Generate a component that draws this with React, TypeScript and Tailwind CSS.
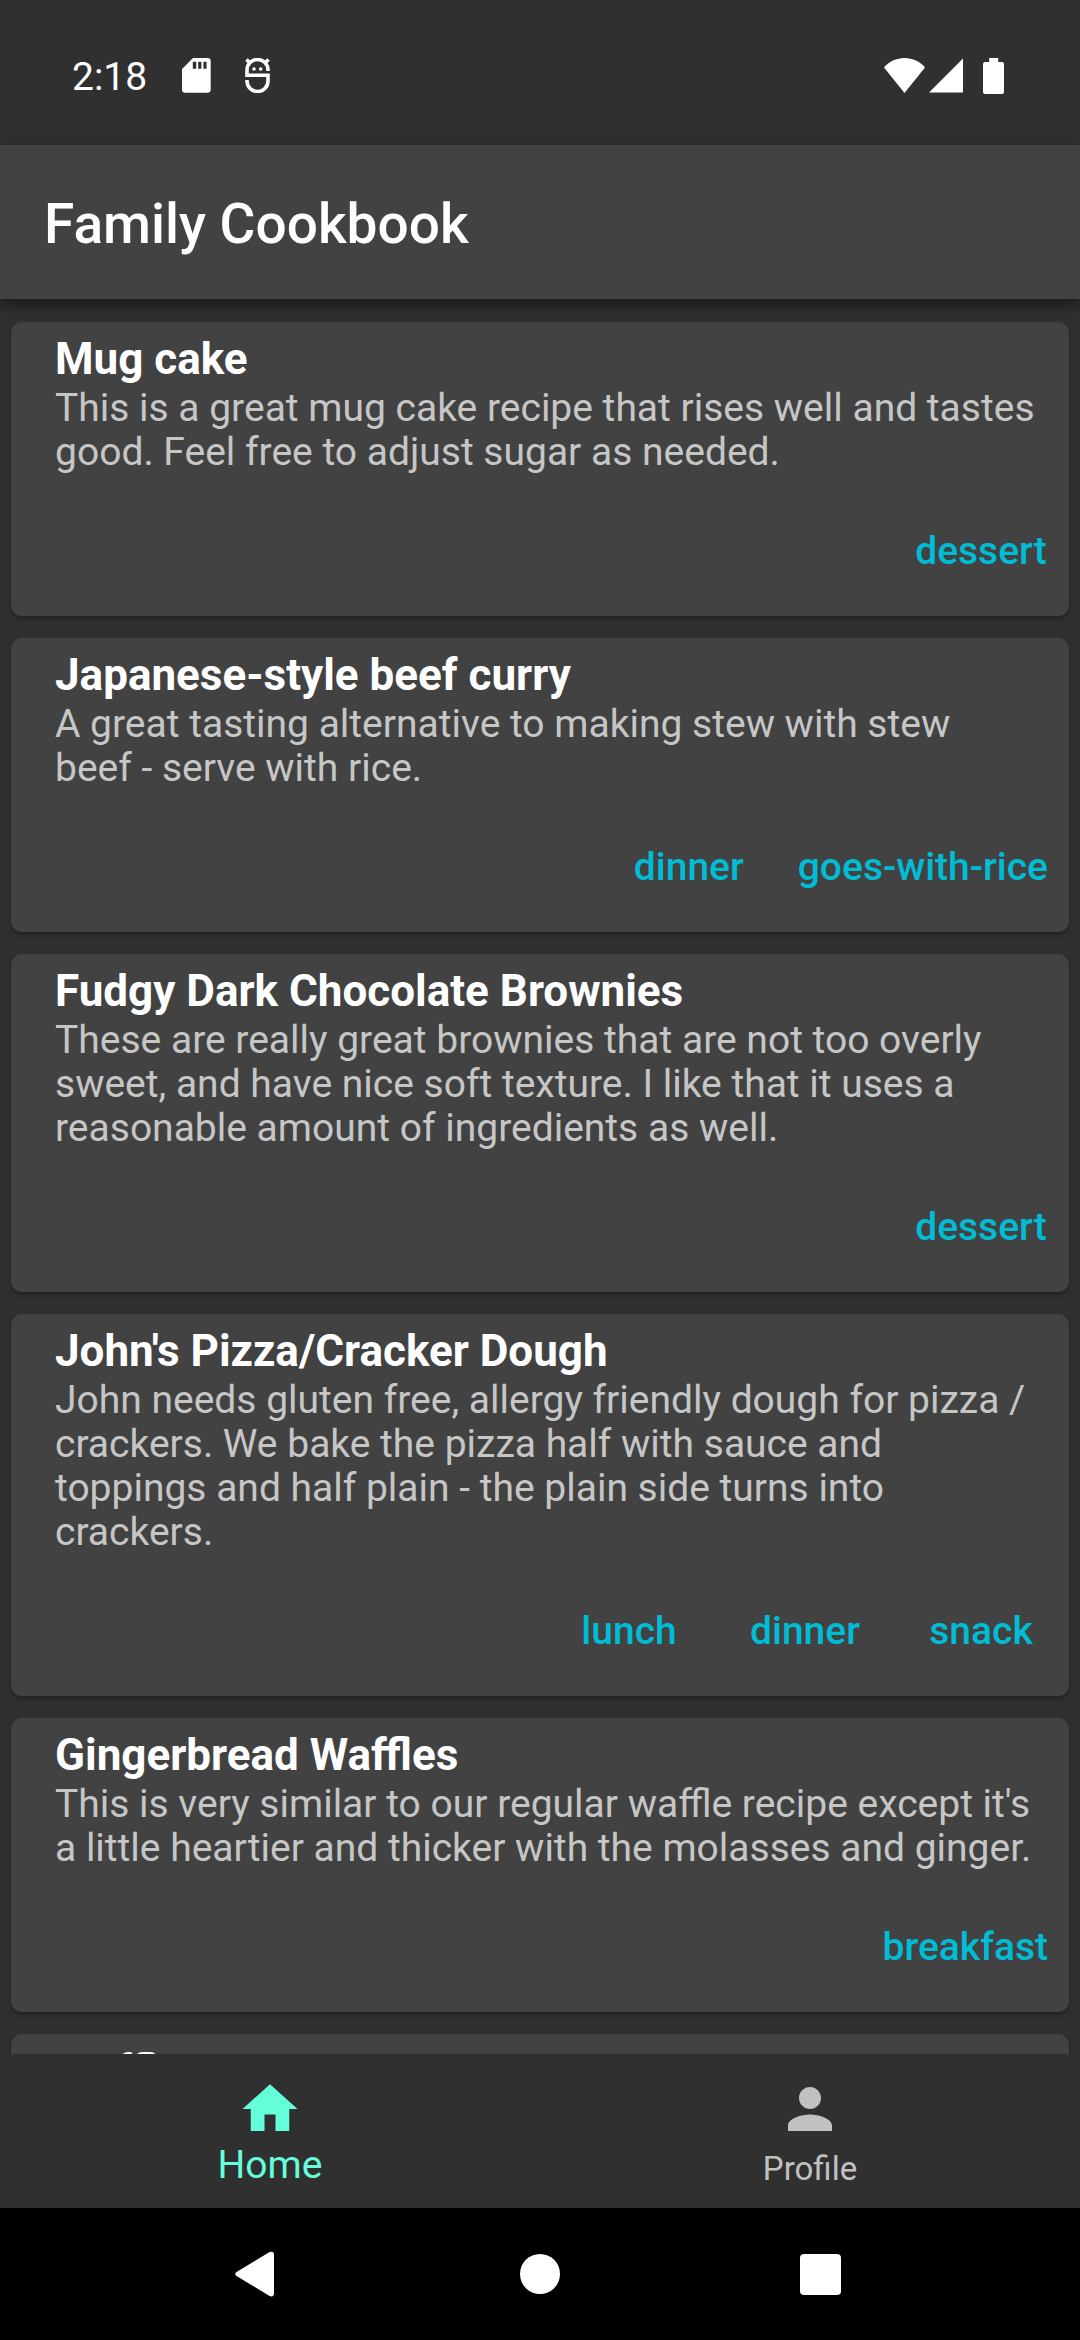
import React from "react";

type Recipe = { title: string; description: string; tags: string[] };

const recipes: Recipe[] = [
  {
    title: "Mug cake",
    description:
      "This is a great mug cake recipe that rises well and tastes good. Feel free to adjust sugar as needed.",
    tags: ["dessert"],
  },
  {
    title: "Japanese-style beef curry",
    description:
      "A great tasting alternative to making stew with stew beef - serve with rice.",
    tags: ["dinner", "goes-with-rice"],
  },
  {
    title: "Fudgy Dark Chocolate Brownies",
    description:
      "These are really great brownies that are not too overly sweet, and have nice soft texture. I like that it uses a reasonable amount of ingredients as well.",
    tags: ["dessert"],
  },
  {
    title: "John's Pizza/Cracker Dough",
    description:
      "John needs gluten free, allergy friendly dough for pizza / crackers. We bake the pizza half with sauce and toppings and half plain - the plain side turns into crackers.",
    tags: ["lunch", "dinner", "snack"],
  },
  {
    title: "Gingerbread Waffles",
    description:
      "This is very similar to our regular waffle recipe except it's a little heartier and thicker with the molasses and ginger.",
    tags: ["breakfast"],
  },
  {
    title: "Waffles",
    description: "",
    tags: [],
  },
];

function StatusBar() {
  return (
    <div className="flex h-[145px] shrink-0 items-center justify-between pt-[6px] pr-[76px] pl-[72px] text-white">
      <div className="flex items-center">
        <span className="pt-[2px] text-[39px] leading-[46px]">2:18</span>
        <svg className="ml-[35px] h-[35px] w-[29px]" viewBox="0 0 29 35" fill="currentColor" aria-hidden="true">
          <path
            fillRule="evenodd"
            d="M11 0H25.500A3.200 3.200 0 0 1 28.700 3.200V31.500A3.200 3.200 0 0 1 25.500 34.700H3.200A3.200 3.200 0 0 1 0 31.500V11ZM10.800 3.800V10.800H14.200V3.800ZM16.200 3.800V10.800H19.400V3.800ZM21.400 3.800V10.800H24.600V3.800Z"
          />
        </svg>
        <svg className="ml-[34px] h-[35px] w-[25px]" viewBox="0 0 25 35" fill="none" stroke="currentColor" strokeWidth="3.600" aria-hidden="true">
          <path d="M23 13V12A10.500 10.500 0 0 0 2 12V17.300H23V23A10.500 10.500 0 0 1 2 23V22" />
          <path d="M1.500 1.500L5 5M23.500 1.500L20 5" />
          <circle cx="9" cy="11" r="1.800" fill="currentColor" stroke="none" />
          <circle cx="15.700" cy="11" r="1.800" fill="currentColor" stroke="none" />
        </svg>
      </div>
      <div className="flex items-center">
        <svg className="h-[35px] w-[41px]" viewBox="0 0 41 35" fill="currentColor" aria-hidden="true">
          <path d="M20.500 35L0 9.500C5 3.500 12.500 0 20.500 0S36 3.500 41 9.500Z" />
        </svg>
        <svg className="ml-1 h-[35px] w-[34px]" viewBox="0 0 34 35" fill="currentColor" aria-hidden="true">
          <path d="M34 0.500V34.500H0Z" />
        </svg>
        <svg className="ml-5 h-[36px] w-[21px]" viewBox="0 0 21 36" fill="currentColor" aria-hidden="true">
          <path d="M6.200 0H15.200V4H19A2 2 0 0 1 21 6V34A2 2 0 0 1 19 36H2A2 2 0 0 1 0 34V6A2 2 0 0 1 2 4H6.200Z" />
        </svg>
      </div>
    </div>
  );
}

function RecipeCard({ title, description, tags }: Recipe) {
  return (
    <li className="rounded-[11px] bg-[#424242] pt-[11px] shadow-[0_3px_4px_rgba(0,0,0,0.3)]">
      <div className="pr-[34px] pl-11">
        <h2 className="text-[44px] leading-[52px] font-bold text-white">{title}</h2>
        <p className="pt-px text-[39px] leading-[44px] text-[#c6c6c6]">{description}</p>
      </div>
      <div className="flex justify-end pt-[10px]">
        {tags.map((tag) => (
          <button
            key={tag}
            type="button"
            className="h-[132px] min-w-[176px] px-[21px] pt-[2px] text-[39px] leading-[44px] font-medium text-[#00bcd4]"
          >
            {tag}
          </button>
        ))}
      </div>
    </li>
  );
}

function BottomNav() {
  return (
    <nav className="flex h-[154px] shrink-0 bg-[#303030]">
      <button type="button" aria-current="page" className="flex flex-1 flex-col items-center pt-[22px] text-[#64ffda]">
        <svg className="size-[66px]" viewBox="0 0 24 24" fill="currentColor" aria-hidden="true">
          <path d="M10 20v-6h4v6h5v-8h3L12 3 2 12h3v8z" />
        </svg>
        <span className="flex h-[46px] items-end text-[39px] leading-[46px]">Home</span>
      </button>
      <button type="button" className="flex flex-1 flex-col items-center pt-[22px] text-[#c1c1c1]">
        <svg className="size-[66px]" viewBox="0 0 24 24" fill="currentColor" aria-hidden="true">
          <path d="M12 12c2.210 0 4-1.790 4-4s-1.790-4-4-4-4 1.790-4 4 1.790 4 4 4zm0 2c-2.670 0-8 1.340-8 4v2h16v-2c0-2.660-5.330-4-8-4z" />
        </svg>
        <span className="flex h-[46px] items-end text-[33px] leading-[39px]">Profile</span>
      </button>
    </nav>
  );
}

function SystemNav() {
  const key = "flex w-[26%] items-center justify-center";
  return (
    <div className="flex h-[132px] shrink-0 justify-center bg-black text-white">
      <button type="button" aria-label="Back" className={key}>
        <svg className="h-[46px] w-[48px]" viewBox="0 0 48 46" fill="currentColor" aria-hidden="true">
          <path d="M1.500 21L34.500 1Q39 -0.500 39 4V42Q39 46.500 34.500 45L1.500 25Q-1 23 1.500 21Z" />
        </svg>
      </button>
      <button type="button" aria-label="Home screen" className={key}>
        <span className="size-10 rounded-full bg-white" />
      </button>
      <button type="button" aria-label="Recent apps" className={key}>
        <span className="size-[41px] rounded-[4px] bg-white" />
      </button>
    </div>
  );
}

export default function App() {
  return (
    <div className="flex h-screen flex-col bg-[#303030] font-['Roboto',sans-serif]">
      <StatusBar />
      <header className="relative z-10 flex h-[154px] shrink-0 items-center bg-[#424242] px-11 pt-[4px] shadow-[0_6px_14px_rgba(0,0,0,0.5)]">
        <h1 className="text-[55px] leading-[64px] font-medium text-white">Family Cookbook</h1>
      </header>
      <main className="min-h-0 flex-1 overflow-y-auto [scrollbar-width:none]">
        <ul className="flex flex-col gap-[22px] px-[11px] py-[23px]">
          {recipes.map((recipe) => (
            <RecipeCard key={recipe.title} {...recipe} />
          ))}
        </ul>
      </main>
      <BottomNav />
      <SystemNav />
    </div>
  );
}
